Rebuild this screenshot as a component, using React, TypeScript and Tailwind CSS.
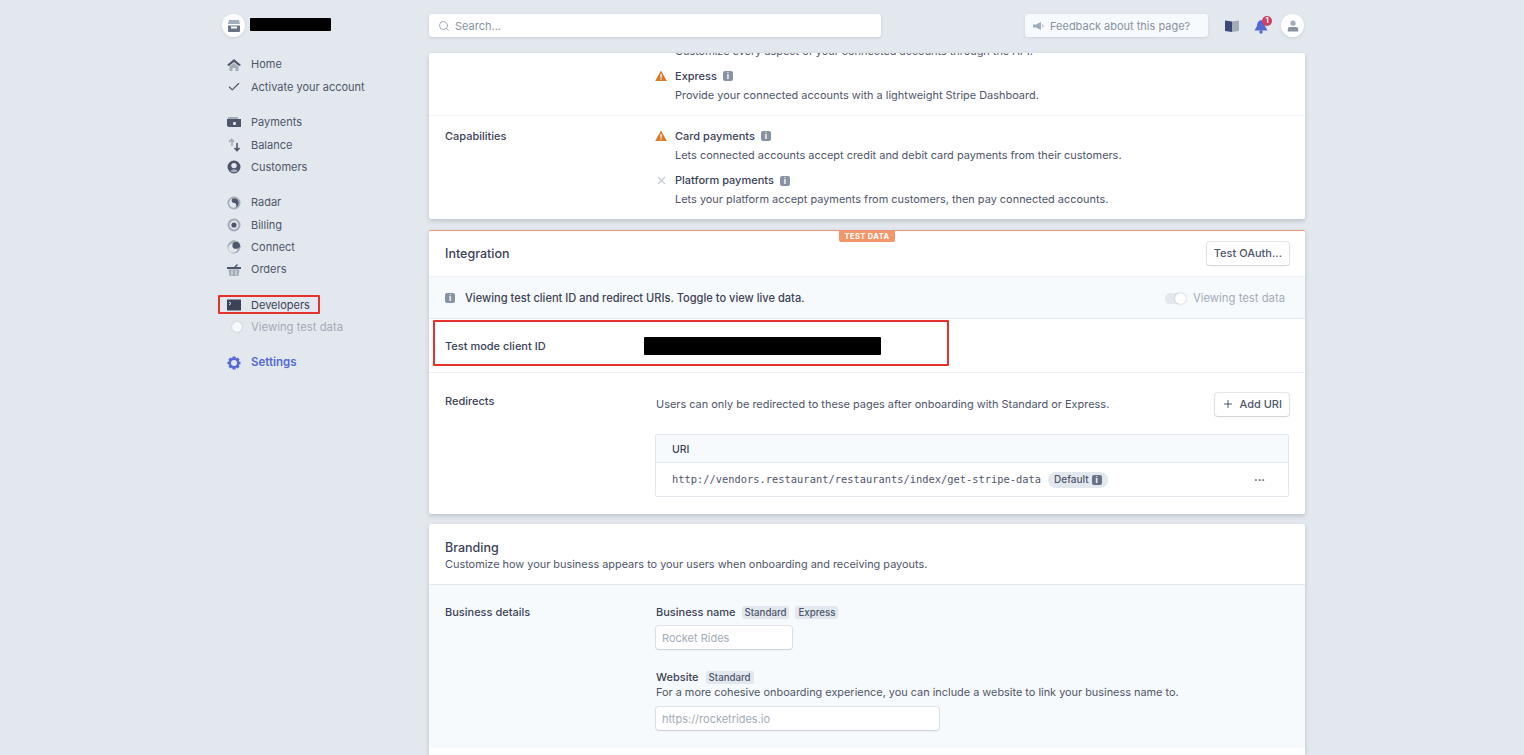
import { ReactNode } from 'react'
import { Check, Plus, Search, X } from 'lucide-react'

const DARK = '#4f566b'
const LIGHT = '#a3acb9'

function HomeIcon() {
  return (
    <svg width="14" height="14" viewBox="0 0 14 14">
      <path d="M7 1 L14 7 L12 8 L7 4 L2 8 L0 7 Z" fill={DARK} />
      <path d="M2.5 8.5 L7 5 L11.5 8.5 V13 H8.5 V10 H5.5 V13 H2.5 Z" fill={LIGHT} />
    </svg>
  )
}

function PaymentsIcon() {
  return (
    <svg width="14" height="14" viewBox="0 0 14 14">
      <path d="M1 2 H11 V4 H1 Z" fill={LIGHT} />
      <path d="M0 4 H14 V12 H2 Q0 12 0 10 Z" fill={DARK} />
      <rect x="6" y="7" width="3" height="3" rx="1" fill="#e3e8ee" />
    </svg>
  )
}

function BalanceIcon() {
  return (
    <svg width="14" height="14" viewBox="0 0 14 14" fill="none" strokeWidth="1.6">
      <path d="M5 8 V1.5 M2 4 L4.6 1.5 L7 4" stroke={LIGHT} />
      <path d="M10 5 V12.5 M7.5 10 L10 12.5 L12.5 10" stroke={DARK} />
    </svg>
  )
}

function CustomersIcon() {
  return (
    <svg width="14" height="14" viewBox="0 0 14 14">
      <circle cx="7" cy="7" r="6.5" fill={DARK} />
      <circle cx="7" cy="5.6" r="2.7" fill="#e3e8ee" />
      <path d="M3 11 Q7 7.5 11 11 Q7 13.5 3 11 Z" fill={LIGHT} />
    </svg>
  )
}

function RadarIcon() {
  return (
    <svg width="14" height="14" viewBox="0 0 14 14">
      <circle cx="7" cy="7" r="6.5" fill={LIGHT} />
      <circle cx="7" cy="7" r="4.8" fill="#e3e8ee" />
      <path d="M7 2.2 A4.8 4.8 0 0 1 7 11.8 A2.4 2.4 0 0 0 7 7 A2.4 2.4 0 0 1 7 2.2 Z" fill={DARK} />
    </svg>
  )
}

function BillingIcon() {
  return (
    <svg width="14" height="14" viewBox="0 0 14 14">
      <circle cx="7" cy="7" r="6.5" fill={LIGHT} />
      <circle cx="7" cy="7" r="4.4" fill="#e3e8ee" />
      <circle cx="7" cy="7" r="2.6" fill={DARK} />
    </svg>
  )
}

function ConnectIcon() {
  return (
    <svg width="14" height="14" viewBox="0 0 14 14">
      <circle cx="7" cy="7" r="6.5" fill={LIGHT} />
      <circle cx="6" cy="8" r="4.6" fill="#e3e8ee" />
      <path d="M5 .8 A6.5 6.5 0 0 1 13.4 7 L9 8.5 A4 4 0 0 0 5 .8 Z" fill={DARK} />
      <circle cx="8.8" cy="5.4" r="3.4" fill={DARK} />
    </svg>
  )
}

function OrdersIcon() {
  return (
    <svg width="14" height="14" viewBox="0 0 14 14">
      <path d="M0 4 H14 V6 H0 Z" fill={DARK} />
      <path d="M7 4 L10 1 L11 2 L9 4 Z" fill={DARK} />
      <path d="M1.5 6.5 H12.5 L11.5 13 H2.5 Z" fill={LIGHT} />
      <path d="M5 7.5 V12 M9 7.5 V12" stroke="#e3e8ee" strokeWidth="1" />
    </svg>
  )
}

function TerminalIcon() {
  return (
    <svg width="14" height="14" viewBox="0 0 14 14">
      <rect x="0" y="1.5" width="14" height="11" rx="0.5" fill="#3c4257" />
      <path d="M2 4 L4 5.5 L2 7" stroke="#e3e8ee" fill="none" strokeWidth="1" />
    </svg>
  )
}

function GearIcon() {
  return (
    <svg width="14" height="14" viewBox="0 0 14 14">
      <path
        d="M5.6 0.5 H8.4 L8.9 2.4 L10.7 1.5 L12.6 3.6 L11.5 5.2 L13.5 5.8 V8.2 L11.5 8.8 L12.6 10.4 L10.7 12.5 L8.9 11.6 L8.4 13.5 H5.6 L5.1 11.6 L3.3 12.5 L1.4 10.4 L2.5 8.8 L0.5 8.2 V5.8 L2.5 5.2 L1.4 3.6 L3.3 1.5 L5.1 2.4 Z"
        fill="#5469d4"
      />
      <circle cx="7" cy="7" r="3" fill="#e3e8ee" />
    </svg>
  )
}

function StoreIcon() {
  return (
    <svg width="14" height="14" viewBox="0 0 14 14">
      <path d="M2 1 H12 L13 5 H1 Z" fill={LIGHT} />
      <path d="M1 6.5 H13 V12 Q13 13 12 13 H2 Q1 13 1 12 Z" fill="#697386" />
      <rect x="4" y="7.5" width="6" height="2" fill="#fff" />
    </svg>
  )
}

function InfoBadge({ dark }: { dark?: boolean }) {
  return (
    <span
      className={`inline-flex h-[10px] w-[10px] items-center justify-center rounded-[2px] text-[8px] leading-none font-bold text-white ${dark ? 'bg-[#697386]' : 'bg-[#8792a2]'}`}
    >
      i
    </span>
  )
}

function WarnIcon() {
  return (
    <svg width="12" height="12" viewBox="0 0 12 12">
      <path d="M6 .6 L11.8 11 H.2 Z" fill="#d97a2b" />
      <rect x="5.4" y="4" width="1.2" height="3.8" fill="#fff" />
      <rect x="5.4" y="8.5" width="1.2" height="1.2" fill="#fff" />
    </svg>
  )
}

function NavItem({ icon, label, className }: { icon: ReactNode; label: string; className?: string }) {
  return (
    <div className={`flex h-[22.4px] items-center ${className ?? 'text-[#4f566b]'}`}>
      <span className="ml-[5px] flex w-[24px] shrink-0 items-center">{icon}</span>
      <span>{label}</span>
    </div>
  )
}

function Sidebar() {
  return (
    <aside className="relative w-[207px] shrink-0 text-[11px]">
      <div className="flex h-[53.4px] items-start pt-[14px]">
        <span className="flex h-[23px] w-[23px] items-center justify-center rounded-full bg-white shadow-[0_1px_3px_rgba(60,66,87,0.15)]">
          <StoreIcon />
        </span>
        <span className="mt-[4px] ml-[5px] h-[13px] w-[81px] rounded-[1px] bg-black" />
      </div>
      <nav className="flex flex-col gap-[13px]">
        <div>
          <NavItem icon={<HomeIcon />} label="Home" />
          <NavItem icon={<Check size={14} strokeWidth={2} className="text-[#4f566b]" />} label="Activate your account" />
        </div>
        <div>
          <NavItem icon={<PaymentsIcon />} label="Payments" />
          <NavItem icon={<BalanceIcon />} label="Balance" />
          <NavItem icon={<CustomersIcon />} label="Customers" />
        </div>
        <div>
          <NavItem icon={<RadarIcon />} label="Radar" />
          <NavItem icon={<BillingIcon />} label="Billing" />
          <NavItem icon={<ConnectIcon />} label="Connect" />
          <NavItem icon={<OrdersIcon />} label="Orders" />
        </div>
        <div>
          <NavItem icon={<TerminalIcon />} label="Developers" className="text-[#3c4257]" />
          <div className="flex h-[22.4px] items-center text-[11.3px] text-[#a3acb9]">
            <span className="ml-[5px] flex w-[24px] shrink-0 items-center">
              <span className="ml-[5px] h-[10px] w-[10px] rounded-full bg-[#f7fafc] shadow-[0_0_2px_rgba(60,66,87,0.25)]" />
            </span>
            <span>Viewing test data</span>
          </div>
        </div>
        <NavItem icon={<GearIcon />} label="Settings" className="text-[11.5px] font-semibold text-[#5469d4]" />
      </nav>
      {/* annotation round Developers */}
      <div className="absolute top-[295px] left-[-4px] h-[19px] w-[102px] rounded-[1px] border-2 border-[#e5322d]" />
    </aside>
  )
}

function TopBar() {
  return (
    <header className="flex h-[53px] items-start pt-[14px] text-[11px]">
      <div className="flex h-[23px] w-[452px] items-center gap-[5px] rounded-[3px] bg-white pt-[1px] pl-[9px] text-[#8792a2] shadow-[0_1px_3px_rgba(60,66,87,0.18)]">
        <Search size={12} className="text-[#a3acb9]" />
        <span>Search...</span>
      </div>
      <div className="ml-[144px] flex h-[23px] w-[183px] items-center gap-[6px] rounded-[3px] bg-[#f7fafc] pt-[1px] pl-[7px] text-[#8792a2] shadow-[0_1px_3px_rgba(60,66,87,0.12)]">
        <svg width="12" height="12" viewBox="0 0 12 12">
          <path d="M1 4.5 H4 L9 2 V10 L4 7.5 H1 Z" fill="#a3acb9" />
          <rect x="10" y="4.5" width="1.5" height="3" fill="#c1c9d2" />
        </svg>
        <span>Feedback about this page?</span>
      </div>
      <svg width="14" height="12" viewBox="0 0 14 12" className="mt-[6px] ml-[17px]">
        <path d="M0 .5 L7 1.5 V12 L0 11 Z" fill="#3d4a78" />
        <path d="M7 1.5 L14 .5 V11 L7 12 Z" fill="#a3acb9" />
      </svg>
      <span className="relative mt-[5px] ml-[15px] h-[14px] w-[14px]">
        <svg width="14" height="15" viewBox="0 0 14 15">
          <path d="M7 1 Q11 2 11 7 L13.5 11.5 H.5 L3 7 Q3 2 7 1 Z" fill="#5469d4" />
          <circle cx="7" cy="13" r="1.7" fill="#5469d4" />
        </svg>
        <span className="absolute top-[-3px] left-[8px] flex h-[10px] w-[10px] items-center justify-center rounded-full bg-[#cd3d64] text-[7.5px] leading-none font-bold text-white">
          1
        </span>
      </span>
      <span className="ml-[13px] flex h-[23px] w-[23px] items-center justify-center rounded-full bg-white shadow-[0_1px_3px_rgba(60,66,87,0.15)]">
        <svg width="12" height="12" viewBox="0 0 12 12">
          <circle cx="6" cy="3.2" r="2.6" fill="#a3acb9" />
          <path d="M.8 11.5 V9 Q.8 7 3 7 H9 Q11.2 7 11.2 9 V11.5 Z" fill="#8792a2" />
        </svg>
      </span>
    </header>
  )
}

function Feature({ icon, title, desc, className }: { icon: ReactNode; title: string; desc: string; className?: string }) {
  return (
    <div className={`flex ${className ?? ''}`}>
      <span className="flex h-[18px] w-[20px] shrink-0 items-center">{icon}</span>
      <div>
        <div className="flex h-[18px] items-center gap-[6px] font-medium text-[#3c4257]">
          {title}
          <InfoBadge />
        </div>
        <div className="mt-[0.5px] h-[18px] text-[10.95px] leading-[18px] text-[#4f566b]">{desc}</div>
      </div>
    </div>
  )
}

function Tag({ children }: { children: ReactNode }) {
  return <span className="rounded-[2px] bg-[#e3e8ee] px-[3px] text-[9.7px] leading-[13px] font-medium text-[#4f566b]">{children}</span>
}

function Capabilities() {
  return (
    <section className="h-[166px] overflow-hidden rounded-[2px] bg-white text-[11px] shadow-[0_2px_4px_rgba(60,66,87,0.22)]">
      <div className="flex h-[63px] flex-col border-b border-[#f0f3f7] pl-[226px]">
        <div className="mt-[-11px] ml-[20px] h-[18px] shrink-0 text-[10.9px] leading-[18px] text-[#4f566b]">
          Customize every aspect of your connected accounts through the API.
        </div>
        <Feature
          className="mt-[7px]"
          icon={<WarnIcon />}
          title="Express"
          desc="Provide your connected accounts with a lightweight Stripe Dashboard."
        />
      </div>
      <div className="flex pt-[11px]">
        <div className="h-[18px] w-[226px] shrink-0 pl-[16px] leading-[18px] font-medium text-[#3c4257]">Capabilities</div>
        <div className="flex flex-col gap-[8px]">
          <Feature
            icon={<WarnIcon />}
            title="Card payments"
            desc="Lets connected accounts accept credit and debit card payments from their customers."
          />
          <Feature
            icon={<X size={13} className="text-[#c1c9d2]" />}
            title="Platform payments"
            desc="Lets your platform accept payments from customers, then pay connected accounts."
          />
        </div>
      </div>
    </section>
  )
}

function OutlineButton({ children }: { children: ReactNode }) {
  return (
    <button
      type="button"
      className="flex h-[23px] items-center rounded-[3px] bg-white px-[7px] text-[11px] font-medium text-[#4f566b] shadow-[0_0_0_1px_rgba(60,66,87,0.12),0_1px_2px_rgba(60,66,87,0.15)]"
    >
      {children}
    </button>
  )
}

function Integration() {
  return (
    <section className="relative mt-[11px] h-[284px] rounded-[2px] border-t border-[#f0937a] bg-white text-[11px] shadow-[0_2px_4px_rgba(60,66,87,0.22)]">
      <span className="absolute top-0 left-[410px] flex h-[11px] w-[56px] items-center justify-center rounded-b-[2px] bg-[#f2976a] text-[7.5px] font-bold tracking-[0.4px] text-white">
        TEST DATA
      </span>
      <div className="flex h-[46px] items-center justify-between border-b border-[#eef1f5] px-[16px]">
        <h2 className="pt-[1px] text-[12.5px] font-medium text-[#3c4257]">Integration</h2>
        <OutlineButton>Test OAuth...</OutlineButton>
      </div>
      <div className="flex h-[42px] items-center justify-between border-b border-[#e3e8ee] bg-[#f7fafc] px-[16px] pt-[1px]">
        <div className="flex items-center gap-[10px] text-[11.1px] font-medium text-[#3c4257]">
          <InfoBadge />
          Viewing test client ID and redirect URIs. Toggle to view live data.
        </div>
        <div className="mr-[4px] flex items-center gap-[7px] text-[11.3px] text-[#a3acb9]">
          <span className="relative h-[11px] w-[21px] rounded-full bg-[#e3e8ee]">
            <span className="absolute top-0 right-0 h-[11px] w-[11px] rounded-full bg-white shadow-[0_0_2px_rgba(60,66,87,0.35)]" />
          </span>
          Viewing test data
        </div>
      </div>
      <div className="flex h-[54px] items-center border-b border-[#eef1f5] pl-[16px]">
        <span className="w-[199px] pt-[1px] font-medium text-[#3c4257]">Test mode client ID</span>
        <span className="h-[18px] w-[237px] rounded-[1px] bg-black" />
      </div>
      <div className="flex pt-[20px] pr-[16px] pl-[16px]">
        <div className="w-[211px] shrink-0 font-medium text-[#3c4257]">Redirects</div>
        <div className="flex-1">
          <div className="flex h-[22px] items-center justify-between text-[#4f566b]">
            <span className="text-[10.95px]">Users can only be redirected to these pages after onboarding with Standard or Express.</span>
            <OutlineButton>
              <Plus size={12} className="mr-[5px]" />
              Add URI
            </OutlineButton>
          </div>
          <div className="mt-[19px] -ml-[1px] rounded-[2px] border border-[#e3e8ee] text-[10.5px]">
            <div className="flex h-[28px] items-center border-b border-[#e3e8ee] bg-[#f7fafc] pt-[2px] pl-[16px] font-medium text-[#3c4257]">URI</div>
            <div className="flex h-[33px] items-center pr-[23px] pl-[16px]">
              <span className="font-['DejaVu_Sans_Mono','Liberation_Mono',monospace] text-[10.4px] text-[#4f566b]">
                http://vendors.restaurant/restaurants/index/get-stripe-data
              </span>
              <span className="ml-[7px] flex h-[16px] items-center gap-[3px] rounded-full bg-[#e3e8ee] px-[6px] text-[10px] font-medium text-[#4f566b]">
                Default
                <InfoBadge dark />
              </span>
              <span className="mb-[4px] ml-auto text-[11px] leading-none font-bold text-[#4f566b]">...</span>
            </div>
          </div>
        </div>
      </div>
    </section>
  )
}

function Branding() {
  return (
    <section className="mt-[10px] h-[300px] rounded-[2px] bg-white text-[11px] shadow-[0_2px_4px_rgba(60,66,87,0.22)]">
      <div className="h-[61px] border-b border-[#e3e8ee] px-[16px] pt-[15px]">
        <h2 className="text-[12.5px] leading-[18px] font-medium text-[#3c4257]">Branding</h2>
        <p className="text-[10.9px] leading-[15px] text-[#4f566b]">Customize how your business appears to your users when onboarding and receiving payouts.</p>
      </div>
      <div className="flex h-[163px] bg-[#f7fafc] pt-[19px] pl-[16px]">
        <div className="w-[211px] shrink-0 leading-[16px] font-medium text-[#3c4257]">Business details</div>
        <div>
          <div className="flex h-[16px] items-center gap-[6px] font-medium text-[#3c4257]">
            Business name
            <Tag>Standard</Tag>
            <Tag>Express</Tag>
          </div>
          <div className="mt-[6px] flex h-[23px] w-[136px] items-center rounded-[3px] bg-white pt-[1px] pl-[6px] text-[#a3acb9] shadow-[0_0_0_1px_rgba(60,66,87,0.12),0_1px_2px_rgba(60,66,87,0.12)]">
            Rocket Rides
          </div>
          <div className="mt-[20px] flex h-[16px] items-center gap-[7px] font-medium text-[#3c4257]">
            Website
            <Tag>Standard</Tag>
          </div>
          <p className="text-[10.9px] leading-[15px] text-[#4f566b]">For a more cohesive onboarding experience, you can include a website to link your business name to.</p>
          <div className="mt-[7px] flex h-[23px] w-[283px] items-center rounded-[3px] bg-white pt-[1px] pl-[6px] text-[#a3acb9] shadow-[0_0_0_1px_rgba(60,66,87,0.12),0_1px_2px_rgba(60,66,87,0.12)]">
            https://rocketrides.io
          </div>
        </div>
      </div>
    </section>
  )
}

export default function App() {
  return (
    <div className="flex h-[755px] w-full overflow-hidden bg-[#e3e8ee] pl-[222px] font-['Inter',sans-serif]">
      <Sidebar />
      <main className="relative w-[876px] shrink-0">
        <TopBar />
        <Capabilities />
        <Integration />
        <Branding />
        {/* annotation round the client ID row */}
        <div className="absolute top-[320px] left-[4px] h-[46px] w-[516px] rounded-[1px] border-2 border-[#e5322d]" />
      </main>
    </div>
  )
}
